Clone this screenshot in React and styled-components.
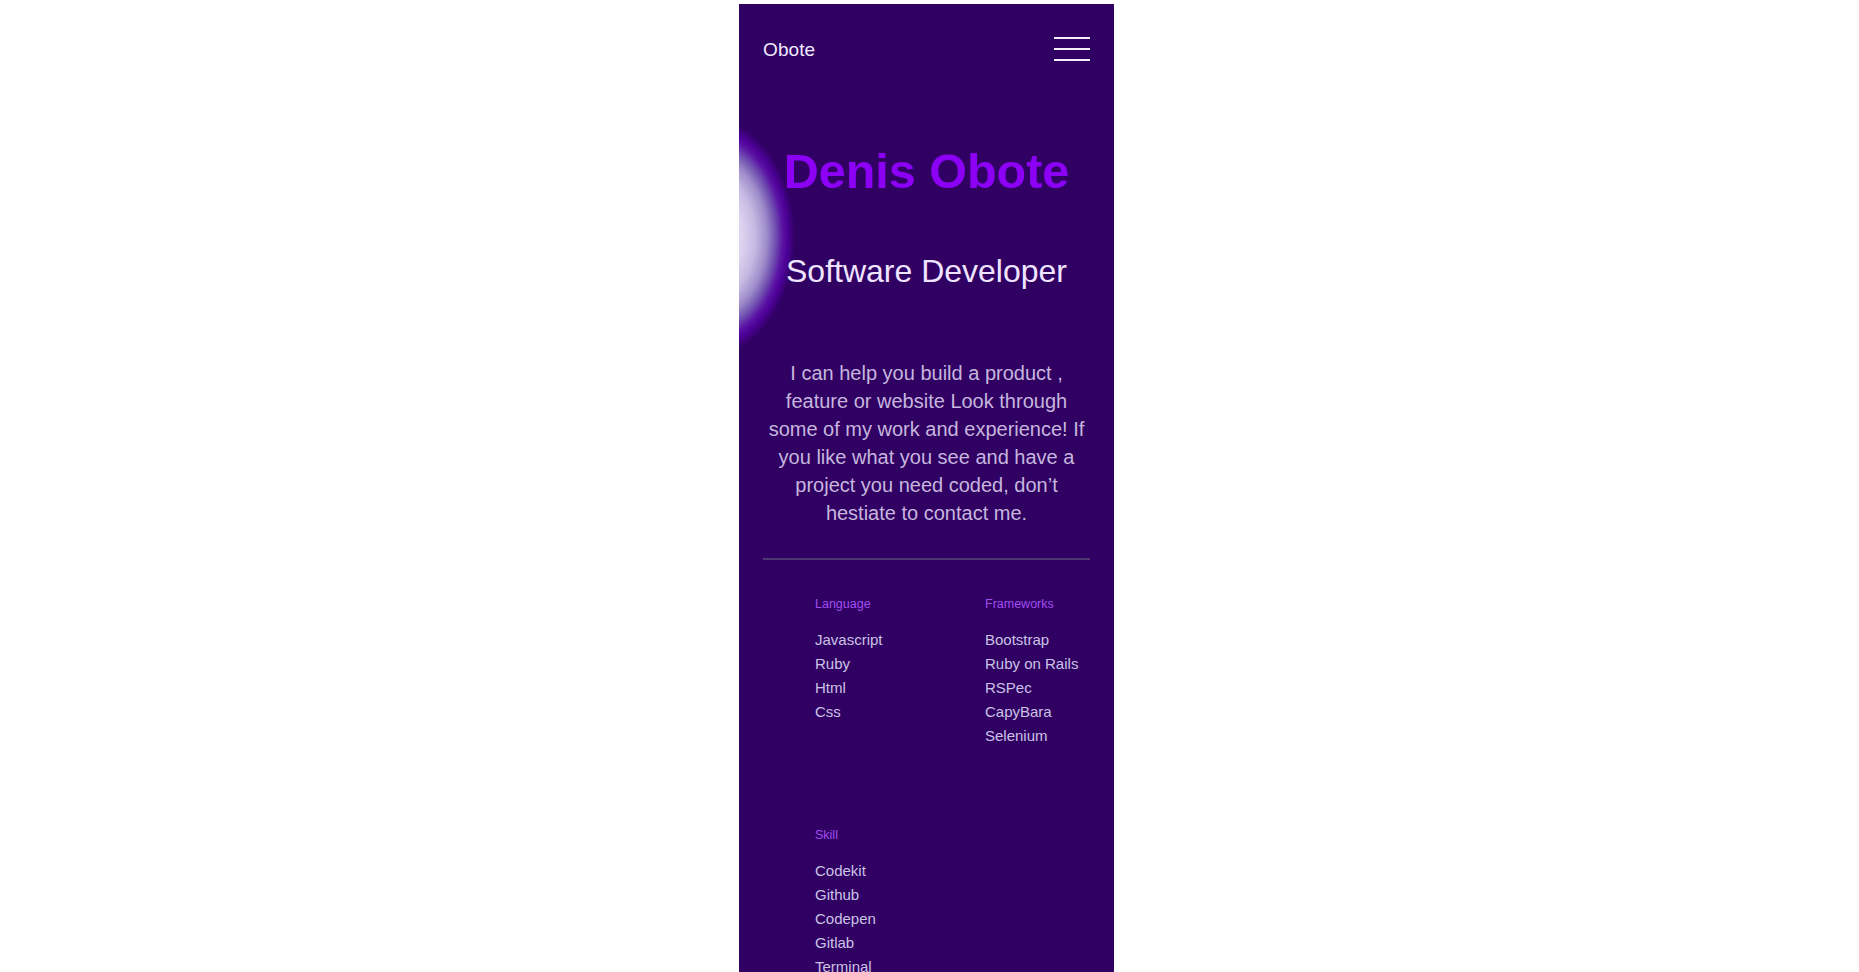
import React from 'react';
import styled, { createGlobalStyle } from 'styled-components';

const GlobalStyle = createGlobalStyle`
  html, body {
    margin: 0;
    padding: 0;
    background: #ffffff;
    font-family: "Liberation Sans", Arial, sans-serif;
  }
`;

const Page = styled.div`
  display: flex;
  justify-content: center;
  padding: 4px 6px 0 0;
`;

const Panel = styled.main`
  width: 375px;
  min-height: 1100px;
  background-color: #300063;
  background-image: radial-gradient(
    ellipse 88px 120px at -32px 233px,
    #e2daf4 0%,
    #dcd3f0 40%,
    #c6b9e2 55%,
    #9e8cca 68%,
    #7050b0 78%,
    #5a12a4 86%,
    #4c0096 92%,
    rgba(55, 0, 110, 0) 100%
  );
  background-repeat: no-repeat;
  box-sizing: border-box;
  padding: 0 24px 60px;
`;

const Nav = styled.nav`
  height: 92px;
  display: flex;
  align-items: center;
  justify-content: space-between;
`;

const Brand = styled.div`
  color: #f2eaff;
  font-size: 19px;
  letter-spacing: 0.1px;
`;

const Burger = styled.button`
  display: flex;
  flex-direction: column;
  gap: 8.7px;
  width: 36px;
  margin-top: -2px;
  padding: 0;
  border: none;
  background: none;
  cursor: pointer;
`;

const BurgerLine = styled.span`
  display: block;
  height: 2px;
  width: 100%;
  background: #f4efff;
`;

const Hero = styled.section`
  text-align: center;
  padding-top: 46px;
`;

const Name = styled.h1`
  margin: 0;
  font-size: 48.5px;
  line-height: 58px;
  font-weight: 700;
  color: #8c00f5;
`;

const Role = styled.h2`
  margin: 51.5px 0 0;
  font-size: 32px;
  line-height: 1.2;
  font-weight: 400;
  color: #efe4ff;
`;

const Intro = styled.p`
  margin: 69px 0 0;
  font-size: 20px;
  line-height: 28px;
  color: #c6b6de;
`;

const Divider = styled.hr`
  margin: 31px 0 0;
  border: none;
  height: 2px;
  background: #4f3872;
`;

const Skills = styled.section`
  display: grid;
  grid-template-columns: 170px 1fr;
  row-gap: 80px;
  padding: 37px 0 0 52px;
`;

const Group = styled.div``;

const GroupTitle = styled.h3`
  margin: 0 0 16px;
  font-size: 12.5px;
  line-height: 15px;
  font-weight: 400;
  color: #a04ef0;
`;

const List = styled.ul`
  list-style: none;
  margin: 0;
  padding: 0;
`;

const Item = styled.li`
  font-size: 15px;
  line-height: 24px;
  color: #cbc3e6;
`;

const groups = [
  { title: 'Language', items: ['Javascript', 'Ruby', 'Html', 'Css'] },
  { title: 'Frameworks', items: ['Bootstrap', 'Ruby on Rails', 'RSPec', 'CapyBara', 'Selenium'] },
  { title: 'Skill', items: ['Codekit', 'Github', 'Codepen', 'Gitlab', 'Terminal'] },
];

const App = () => {
  return (
    <Page>
      <GlobalStyle />
      <Panel>
        <Nav>
          <Brand>Obote</Brand>
          <Burger aria-label="menu">
            <BurgerLine />
            <BurgerLine />
            <BurgerLine />
          </Burger>
        </Nav>
        <Hero>
          <Name>Denis Obote</Name>
          <Role>Software Developer</Role>
          <Intro>
            I can help you build a product , feature or website Look through some of my work and
            experience! If you like what you see and have a project you need coded, don’t hestiate
            to contact me.
          </Intro>
        </Hero>
        <Divider />
        <Skills>
          {groups.map((group) => (
            <Group key={group.title}>
              <GroupTitle>{group.title}</GroupTitle>
              <List>
                {group.items.map((item) => (
                  <Item key={item}>{item}</Item>
                ))}
              </List>
            </Group>
          ))}
        </Skills>
      </Panel>
    </Page>
  );
};

export default App;
